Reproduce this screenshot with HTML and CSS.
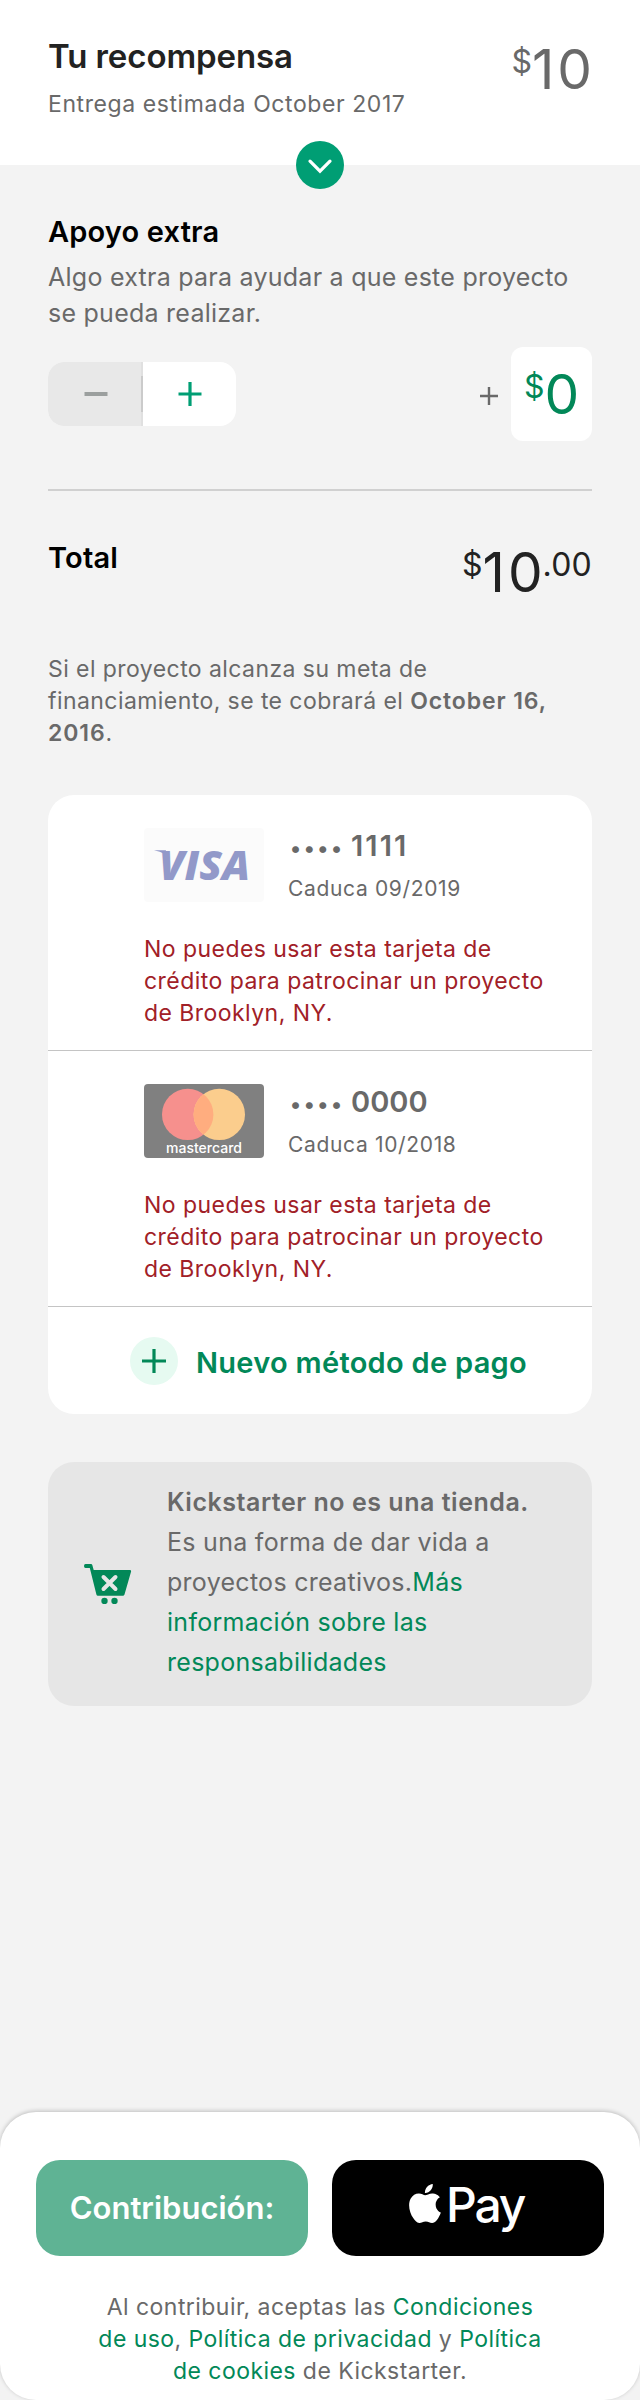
FILE: index.html
```html
<!DOCTYPE html>
<html lang="es">
<head>
<meta charset="utf-8">
<title>Contribución</title>
<link rel="stylesheet" href="styles.css">
</head>
<body>
<header class="reward">
  <div>
    <h1 class="reward-title">Tu recompensa</h1>
    <p class="reward-date">Entrega estimada October 2017</p>
  </div>
  <div class="price price-muted"><span class="minor">$</span><span class="major">10</span></div>
  <button class="expand" aria-label="Expandir">
    <svg width="48" height="48" viewBox="0 0 48 48"><path d="M14 20.2 24 30.2 34 20.2" fill="none" stroke="#fff" stroke-width="3.2" stroke-linecap="round"/></svg>
  </button>
</header>

<main class="content">
  <section>
    <h2 class="heading heading-extra">Apoyo extra</h2>
    <p class="extra-text">Algo extra para ayudar a que este proyecto<br>se pueda realizar.</p>
    <div class="extra-row">
      <div class="stepper">
        <button class="step step-minus" aria-label="Menos"><svg width="24" height="24" viewBox="0 0 24 24"><path d="M.5 12h23" stroke="#9b9f9e" stroke-width="4"/></svg></button>
        <button class="step step-plus" aria-label="Más"><svg width="24" height="24" viewBox="0 0 24 24"><path d="M.5 12h23M12 0v24" stroke="#009e74" stroke-width="3.2"/></svg></button>
      </div>
      <div class="extra-amount">
        <svg class="plus-sign" width="18" height="18" viewBox="0 0 18 18"><path d="M0 9h18M9 0v18" stroke="#696969" stroke-width="2.4"/></svg>
        <div class="amount-box"><div class="price price-green"><span class="minor">$</span><span class="major">0</span></div></div>
      </div>
    </div>
  </section>

  <section class="total">
    <h2 class="heading">Total</h2>
    <div class="price price-total"><span class="minor">$</span><span class="major">10</span><span class="minor cents">.00</span></div>
  </section>

  <p class="notice">Si el proyecto alcanza su meta de<br>financiamiento, se te cobrará el <b>October 16,<br>2016</b>.</p>

  <section class="cards">
    <article class="card">
      <div class="card-top">
        <svg class="brand" width="120" height="74" viewBox="0 0 120 74">
          <rect width="120" height="74" rx="4" fill="#fbfbfb"/>
          <path d="M10 22.3h12l-1 4q-5-3-11-4z" fill="#9299c9"/>
          <text class="visa" x="15" y="51.5" textLength="91" lengthAdjust="spacingAndGlyphs">VISA</text>
        </svg>
        <div>
          <p class="number"><span class="dots">••••</span><span class="ones">1111</span></p>
          <p class="expiry">Caduca 09/2019</p>
        </div>
      </div>
      <p class="error">No puedes usar esta tarjeta de<br>crédito para patrocinar un proyecto<br>de Brooklyn, NY.</p>
    </article>
    <article class="card">
      <div class="card-top">
        <svg class="brand" width="120" height="74" viewBox="0 0 120 74">
          <clipPath id="lens"><circle cx="43.7" cy="30.4" r="25.7"/></clipPath>
          <rect width="120" height="74" rx="4" fill="#808080"/>
          <circle cx="43.7" cy="30.4" r="25.7" fill="#f6908d"/>
          <circle cx="75.3" cy="30.4" r="25.7" fill="#fbcd8d"/>
          <circle cx="75.3" cy="30.4" r="25.7" fill="#ffad7f" clip-path="url(#lens)"/>
          <text class="mastercard" x="22" y="69" textLength="76">mastercard</text>
        </svg>
        <div>
          <p class="number"><span class="dots">••••</span><span>0000</span></p>
          <p class="expiry">Caduca 10/2018</p>
        </div>
      </div>
      <p class="error">No puedes usar esta tarjeta de<br>crédito para patrocinar un proyecto<br>de Brooklyn, NY.</p>
    </article>
    <button class="new-method">
      <svg width="48" height="48" viewBox="0 0 48 48"><circle cx="24" cy="24" r="24" fill="#e6faf1"/><path d="M12 24h24M24 12v24" stroke="#028858" stroke-width="3.2"/></svg>
      <span>Nuevo método de pago</span>
    </button>
  </section>

  <section class="info">
    <svg class="cart" width="48" height="40" viewBox="0 0 48 40">
      <path d="M1.5 0H7q1 0 1.300 1L9.700 6H46q1.500 0 1.100 1.500L40.500 30.500q-.4 1.300-1.700 1.300H14q-1.300 0-1.600-1.300L5.800 4H1.500Q0 4 0 2T1.500 0z" fill="#028858"/>
      <path d="M19.500 13l12 12M31.500 13l-12 12" stroke="#e6e6e6" stroke-width="4" stroke-linecap="round"/>
      <circle cx="20.500" cy="37" r="3.200" fill="#028858"/><circle cx="30.500" cy="37" r="3.200" fill="#028858"/>
    </svg>
    <p><b>Kickstarter no es una tienda.</b><br>Es una forma de dar vida a<br>proyectos creativos.<a>Más<br>información sobre las<br>responsabilidades</a></p>
  </section>
</main>

<footer class="footer">
  <div class="actions">
    <button class="action pledge">Contribución:</button>
    <button class="action apple" aria-label="Apple Pay">
      <svg width="32" height="39" viewBox="2.2 0 19.6 24"><path fill="#fff" d="M12.152 6.896c-.948 0-2.415-1.078-3.960-1.040-2.040.027-3.910 1.183-4.961 3.014-2.117 3.675-.546 9.103 1.519 12.090 1.013 1.454 2.208 3.090 3.792 3.039 1.520-.065 2.090-.987 3.935-.987 1.831 0 2.350.987 3.960.948 1.637-.026 2.676-1.480 3.676-2.948 1.156-1.688 1.636-3.325 1.662-3.415-.039-.013-3.182-1.221-3.220-4.857-.026-3.040 2.480-4.494 2.597-4.559-1.429-2.090-3.623-2.324-4.390-2.376-2-.156-3.675 1.090-4.610 1.090zM15.530 3.830c.843-1.012 1.400-2.427 1.245-3.830-1.207.052-2.662.805-3.532 1.818-.780.896-1.454 2.338-1.273 3.714 1.338.104 2.715-.688 3.559-1.701"/></svg>
      <span>Pay</span>
    </button>
  </div>
  <p class="legal">Al contribuir, aceptas las <a>Condiciones<br>de uso</a>, <a>Política de privacidad</a> y <a>Política<br>de cookies</a> de Kickstarter.</p>
</footer>
</body>
</html>
```
FILE: styles.css
```css
* { box-sizing: border-box; }

body {
  margin: 0;
  height: 2400px;
  display: flex;
  flex-direction: column;
  background: #f3f3f3;
  color: #696969;
  font-family: Inter, "Liberation Sans", sans-serif;
}

h1, h2, p { margin: 0; }
b { font-weight: 600; }
a { color: #028858; }
svg { display: block; flex: none; }
button { border: 0; padding: 0; background: none; font: inherit; color: inherit; }

/* Reward summary */
.reward {
  position: relative;
  display: flex;
  justify-content: space-between;
  height: 165px;
  padding: 36px 48px 0;
  background: #fff;
}
.reward-title { font-size: 33px; line-height: 40px; font-weight: 600; letter-spacing: -.1px; color: #222; }
.reward-date { margin-top: 12px; font-size: 23px; line-height: 32px; letter-spacing: .58px; }
.reward .price { margin-top: 6px; }
.expand {
  position: absolute;
  left: 50%;
  bottom: -24px;
  width: 48px;
  height: 48px;
  margin-left: -24px;
  border-radius: 50%;
  background: #009e74;
}

/* Amounts with raised currency and cents */
.price { display: flex; align-items: flex-start; }
.major { font-size: 55px; line-height: 55px; letter-spacing: 3px; margin-right: -3px; }
.minor { font-size: 32px; line-height: 32px; margin-top: 4px; }
.cents { letter-spacing: .2px; }
.price-muted { color: #696969; }
.price-green { color: #028858; }
.price-total { color: #222; margin-top: 5px; }

.content { flex: 1; padding: 48px 48px 0; }
.heading { font-size: 29px; line-height: 36px; font-weight: 600; letter-spacing: .17px; color: #000; }
.heading-extra { padding-top: 1px; }
.extra-text { margin-top: 9px; font-size: 25px; line-height: 36px; letter-spacing: .25px; }
.extra-row { display: flex; justify-content: space-between; align-items: center; height: 94px; margin-top: 16px; }

.stepper { display: flex; width: 188px; height: 64px; border-radius: 16px; overflow: hidden; background: #fff; }
.step { display: flex; align-items: center; justify-content: center; }
.step-minus {
  width: 95px;
  background:
    linear-gradient(#cbcbcb, #cbcbcb) right center / 2px 36px no-repeat,
    linear-gradient(#e0e0e0, #e0e0e0) right center / 2px 64px no-repeat,
    #e8e8e8;
}
.step-plus { width: 93px; }
.extra-amount { display: flex; align-items: center; gap: 13px; }
.plus-sign { margin-top: 4px; }
.amount-box { display: flex; justify-content: center; width: 81px; height: 94px; padding-top: 20px; border-radius: 12px; background: #fff; }

.total { display: flex; justify-content: space-between; height: 115px; margin-top: 48px; padding-top: 49px; border-top: 2px solid #d0d0d0; }
.notice { margin-top: 49px; font-size: 23px; line-height: 32px; letter-spacing: .43px; }
.notice b { letter-spacing: .9px; }

/* Payment methods */
.cards { margin-top: 46px; border-radius: 26px; background: #fff; overflow: hidden; }
.card { padding: 33px 40px 21px 96px; border-bottom: 1px solid #c4c4c4; }
.card-top { display: flex; gap: 24px; height: 74px; }
.visa { font: italic 800 41px "Open Sans", sans-serif; fill: #9299c9; }
.mastercard { font: 500 14px Inter, sans-serif; fill: #fff; }
.number { display: flex; align-items: baseline; height: 36px; font-size: 29px; line-height: 36px; font-weight: 600; }
.dots { width: 63px; padding-left: 2px; font-size: 22px; letter-spacing: 2.6px; }
.ones { letter-spacing: 2.1px; }
.expiry { margin-top: 11px; font-size: 21px; line-height: 28px; letter-spacing: .66px; }
.error { margin-top: 31px; font-size: 23px; line-height: 32px; letter-spacing: .45px; color: #a12027; white-space: nowrap; }
.new-method {
  display: flex;
  align-items: center;
  gap: 18px;
  width: 100%;
  height: 107px;
  padding-left: 82px;
  font-size: 29px;
  font-weight: 600;
  letter-spacing: .29px;
  color: #028858;
}
.new-method span { padding-top: 3px; }

.info {
  display: flex;
  align-items: center;
  gap: 35px;
  height: 244px;
  margin-top: 48px;
  padding-left: 36px;
  border-radius: 26px;
  background: #e6e6e6;
  font-size: 25px;
  line-height: 40px;
  letter-spacing: .28px;
}
.info p { margin-top: -4px; }
.info b { letter-spacing: .53px; }

.footer { height: 288px; padding: 48px 36px 0; border-radius: 36px; background: #fff; box-shadow: 0 -1px 4px rgba(0, 0, 0, .22); }
.actions { display: flex; gap: 24px; }
.action { display: flex; align-items: center; justify-content: center; width: 272px; height: 96px; border-radius: 24px; color: #fff; }
.pledge { padding-bottom: 1px; background: #5fb394; font-size: 31px; font-weight: 600; }
.apple { justify-content: flex-start; padding-left: 77px; background: #000; }
.apple svg { margin-top: -9px; }
.apple span { margin: -7px 0 0 5px; font-size: 48px; font-weight: 500; letter-spacing: -2.2px; }
.legal { margin-top: 35px; font-size: 23px; line-height: 32px; letter-spacing: .45px; text-align: center; }
```
